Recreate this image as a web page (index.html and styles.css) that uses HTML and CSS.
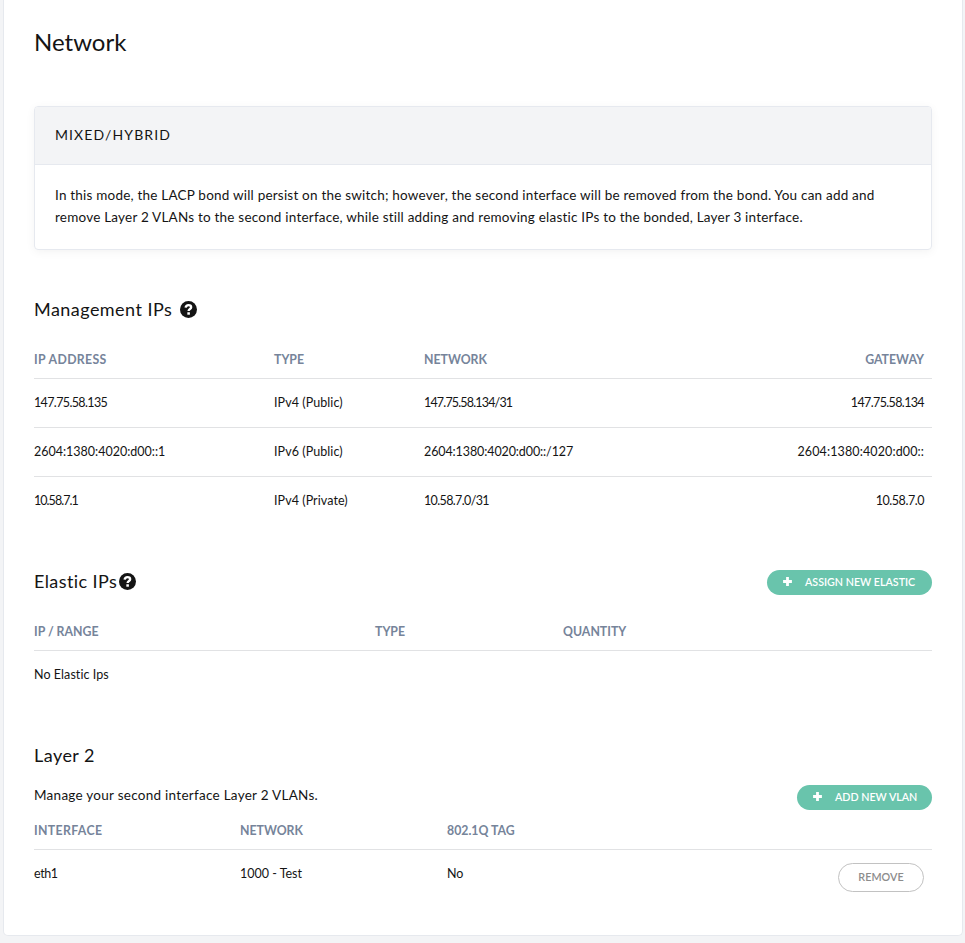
FILE: index.html
```html
<!DOCTYPE html>
<html lang="en">
<head>
<meta charset="utf-8">
<title>Network</title>
<link rel="stylesheet" href="styles.css">
</head>
<body>
<svg class="defs" aria-hidden="true">
  <symbol id="help" viewBox="0 0 16 16">
    <circle cx="8" cy="8" r="8" fill="#141414"/>
    <path d="M5.3 6.3C5.5 4.7 6.6 3.9 8 3.9C9.5 3.9 10.5 4.7 10.5 5.9C10.5 7.6 8.1 7.5 8.1 9.5" fill="none" stroke="#fff" stroke-width="2.2"/>
    <rect x="6.9" y="10.6" width="2.4" height="2.3" fill="#fff"/>
  </symbol>
  <symbol id="plus" viewBox="0 0 9 9">
    <path d="M3.1.1h2.8v3h3v2.8h-3v3H3.1v-3h-3V3.1h3z" fill="#fff"/>
  </symbol>
</svg>
<main class="panel">
  <h1 class="title">Network</h1>

  <section class="card">
    <h2 class="card-head">MIXED/HYBRID</h2>
    <p class="card-body">In this mode, the LACP bond will persist on the switch; however, the second interface will be removed from the bond. You can add and<br>remove Layer 2 VLANs to the second interface, while still adding and removing elastic IPs to the bonded, Layer 3 interface.</p>
  </section>

  <section class="management">
    <header class="section-head"><h2>Management IPs</h2><svg class="help help-gap"><use href="#help"/></svg></header>
    <table>
      <colgroup><col class="m1"><col class="m2"><col class="m3"><col></colgroup>
      <thead><tr><th class="loose">IP ADDRESS</th><th>TYPE</th><th>NETWORK</th><th class="end">GATEWAY</th></tr></thead>
      <tbody>
        <tr><td class="ip4">147.75.58.135</td><td class="kind">IPv4 (Public)</td><td class="ip4 range">147.75.58.134/31</td><td class="end ip4">147.75.58.134</td></tr>
        <tr><td>2604:1380:4020:d00::1</td><td class="kind">IPv6 (Public)</td><td class="ip6-range">2604:1380:4020:d00::/127</td><td class="end ip6">2604:1380:4020:d00::</td></tr>
        <tr><td class="ip4 short">10.58.7.1</td><td class="kind">IPv4 (Private)</td><td class="ip4">10.58.7.0/31</td><td class="end ip4 gateway">10.58.7.0</td></tr>
      </tbody>
    </table>
  </section>

  <section class="elastic">
    <header class="section-head"><h2>Elastic IPs</h2><svg class="help"><use href="#help"/></svg>
      <button class="btn wide"><svg class="plus"><use href="#plus"/></svg><span>ASSIGN NEW ELASTIC</span></button></header>
    <table>
      <colgroup><col class="e1"><col class="e2"><col></colgroup>
      <thead><tr><th>IP / RANGE</th><th>TYPE</th><th>QUANTITY</th></tr></thead>
      <tbody><tr><td colspan="3" class="kind">No Elastic Ips</td></tr></tbody>
    </table>
  </section>

  <section class="layer2">
    <header class="section-head"><h2>Layer 2</h2></header>
    <div class="manage"><p>Manage your second interface Layer 2 VLANs.</p>
      <button class="btn"><svg class="plus"><use href="#plus"/></svg><span>ADD NEW VLAN</span></button></div>
    <table>
      <colgroup><col class="l1"><col class="l2"><col class="l3"><col></colgroup>
      <thead><tr><th class="loose">INTERFACE</th><th>NETWORK</th><th>802.1Q TAG</th><th></th></tr></thead>
      <tbody><tr><td class="iface">eth1</td><td>1000 - Test</td><td>No</td><td class="end action"><button class="remove">REMOVE</button></td></tr></tbody>
    </table>
  </section>
</main>
</body>
</html>
```
FILE: styles.css
```css
* { box-sizing: border-box; }
body {
  margin: 0;
  height: 943px;
  overflow: hidden;
  background: #f3f4f6;
  color: #141414;
  font: 13px/22px Lato, "Liberation Sans", sans-serif;
  font-variant-ligatures: none;
}
h1, h2, p { margin: 0; font-weight: 400; }
.defs { position: absolute; width: 0; height: 0; }
.panel {
  width: 960px;
  height: 936px;
  margin-left: 3px;
  padding: 22px 30px 0;
  background: #fff;
  border: 1px solid #e6e9ee;
  border-top: 0;
  border-radius: 0 0 5px 5px;
}
.title { height: 84px; font-size: 24px; line-height: 40px; }
.card {
  height: 144px;
  border: 1px solid #e6e9ef;
  border-radius: 4px;
  box-shadow: 0 2px 10px rgba(0, 0, 0, .05);
}
.card-head {
  height: 58px;
  padding-left: 20px;
  background: #f3f4f6;
  border-bottom: 1px solid #e6e9ef;
  border-radius: 3px 3px 0 0;
  font-size: 14px;
  line-height: 55px;
  letter-spacing: 1.1px;
}
.card-body { padding: 19px 0 0 20px; white-space: nowrap; font-size: 13.5px; letter-spacing: .21px; }
.management { margin-top: 44px; }
.section-head { display: flex; align-items: center; height: 32px; }
.section-head h2 { padding-bottom: 2px; font-size: 18px; line-height: 30px; letter-spacing: .46px; }
.elastic .section-head h2 { letter-spacing: .4px; }
.help { width: 17px; height: 17px; margin: 0 0 2px 2px; }
.help-gap { margin-left: 8px; }
table { width: 100%; table-layout: fixed; border-collapse: collapse; }
th, td { padding: 0; text-align: left; white-space: nowrap; }
th {
  height: 52px;
  padding-top: 17px;
  color: #76849a;
  font-size: 12.3px;
  font-weight: 700;
  line-height: 22px;
  border-bottom: 1px solid #e1e2e4;
}
td { height: 49px; font-size: 12.5px; border-bottom: 1px solid #e1e2e4; }
tbody tr:last-child td { border-bottom: 0; }
.end { text-align: right; padding-right: 8px; }
.loose { letter-spacing: .35px; }
.ip4 { letter-spacing: -.63px; }
.range { letter-spacing: -.83px; }
.short { letter-spacing: -.95px; }
.gateway { letter-spacing: -.45px; }
.ip6 { letter-spacing: .12px; }
.ip6-range { letter-spacing: -.1px; }
.kind { letter-spacing: .07px; }
.iface { letter-spacing: -.4px; }
.m1 { width: 240px; } .m2 { width: 150px; } .m3 { width: 210px; }
.e1 { width: 341px; } .e2 { width: 188px; }
.l1 { width: 206px; } .l2 { width: 207px; } .l3 { width: 207px; }
.elastic { margin-top: 41px; }
.layer2 { margin-top: 41px; }
button { font-family: inherit; font-weight: 600; }
.btn {
  display: flex;
  align-items: center;
  width: 135px;
  height: 25px;
  margin-left: auto;
  padding: 0 0 1px 16px;
  border: 0;
  border-radius: 13px;
  background: #69c4ac;
  color: #fff;
  font-size: 10.7px;
  white-space: nowrap;
}
.wide { width: 165px; }
.plus { width: 9px; height: 9px; margin-right: 13px; }
.manage { display: flex; align-items: center; height: 50px; font-size: 13.5px; letter-spacing: .27px; }
.manage p { padding-bottom: 4px; }
.manage .btn { letter-spacing: 0; }
.layer2 th { height: 27px; padding: 0 0 8px; line-height: 18px; }
.layer2 .action { padding-top: 7px; }
.remove {
  width: 86px;
  height: 29px;
  padding: 0 0 1px;
  border: 1px solid #c2c2c2;
  border-radius: 15px;
  background: #fff;
  color: #8c8c8c;
  font-size: 10.8px;
}
```
